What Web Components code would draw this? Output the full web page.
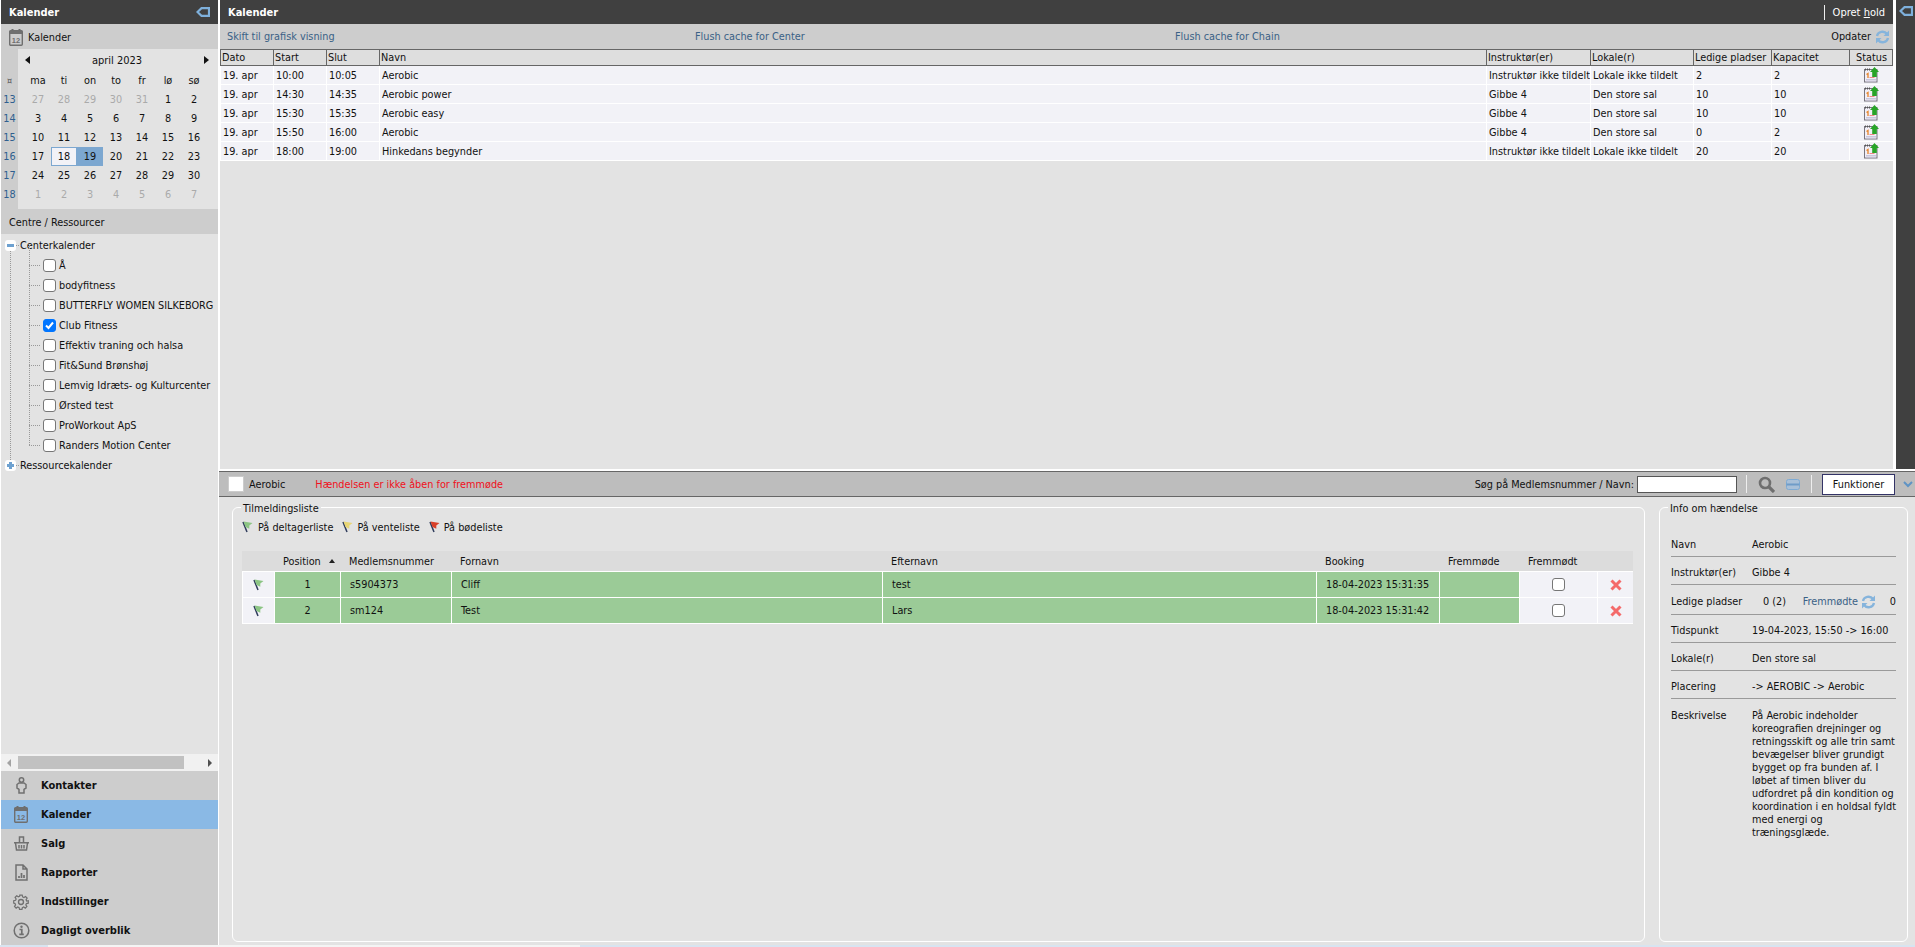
<!DOCTYPE html>
<html lang="da">
<head>
<meta charset="utf-8">
<title>Kalender</title>
<style>
    html, body { margin: 0; height: 100%; overflow: hidden; background: #fff; }
    body { font: 10.8px "DejaVu Sans Condensed", "DejaVu Sans", sans-serif; color: #111; }
</style>
</head>
<body>
<app-shell></app-shell>
<page-foot></page-foot>
<script>
// icons used in more than one component
const icons = {
    back: `<svg width="14" height="10" viewBox="0 0 14 10"><path d="M1.500 5 5.500 1.200H13v7.600H5.500z" fill="none" stroke="#7eb0dc" stroke-width="2.200"/></svg>`,
    refresh: `<svg width="15" height="14" viewBox="0 0 15 14" fill="none" stroke="#86b4dc" stroke-width="2.300"><path d="M2 6a5.500 5 0 0 1 10-2"/><path d="M13 8a5.500 5 0 0 1-10 2"/><path d="M14 .5v5.500H8.500z" fill="#86b4dc" stroke="none"/><path d="M1 13.500V8h5.500z" fill="#86b4dc" stroke="none"/></svg>`,
    cal: `<svg width="14" height="17" viewBox="0 0 14 17"><path d="M3.500 0v3M10.500 0v3" stroke="#6f6f6f" stroke-width="2"/><rect x=".7" y="1.700" width="12.600" height="14.600" rx="1" fill="none" stroke="#6f6f6f" stroke-width="1.400"/><rect x=".7" y="1.700" width="12.600" height="3.300" fill="#6f6f6f"/><text x="7" y="14" font-size="7.500" font-weight="700" font-family="Liberation Sans" text-anchor="middle" fill="#6f6f6f">12</text></svg>`
};
const flag = c => `<svg width="11" height="12" viewBox="0 0 11 12"><path d="M1 1 5 11" stroke="#2f3c5c" stroke-width="1.500"/><path d="M1.500 .5 10.500 2 7.300 4.500 7.300 7.800 3.500 6z" fill="${c}"/></svg>`;
const greenFlag = flag('#8cc584');

class CalHead extends HTMLElement {
    constructor() {
        super();
        this.attachShadow({ mode: 'open' }).innerHTML = `
            <style>
                :host { display: flex; align-items: center; height: 24px; background: #404040; color: #fff; font-weight: 700; font-size: 11px; padding: 0 8px; }
                ::slotted(*) { margin-left: auto; }
            </style>
            <span><slot name="title"></slot></span><slot></slot>`;
    }
}
customElements.define('cal-head', CalHead);

class MiniCalendar extends HTMLElement {
    constructor() {
        super();
        const shadow = this.attachShadow({ mode: 'open' });
        const weeks = [[13, 27, 28, 29, 30, 31, 1, 2], [14, 3, 4, 5, 6, 7, 8, 9], [15, 10, 11, 12, 13, 14, 15, 16],
            [16, 17, 18, 19, 20, 21, 22, 23], [17, 24, 25, 26, 27, 28, 29, 30], [18, 1, 2, 3, 4, 5, 6, 7]];
        let rows = '';
        weeks.forEach((w, r) => {
            rows += `<div class="wk">${w[0]}</div>`;
            w.slice(1).forEach(d => {
                const other = (r === 0 && d > 20) || r === 5;
                const cls = other ? 'other' : d === 18 ? 'today' : d === 19 ? 'sel' : '';
                rows += `<div class="d ${cls}">${d}</div>`;
            });
            rows += '<div></div>';
        });
        shadow.innerHTML = `
            <style>
                :host { display: grid; grid-template-columns: 24px repeat(7, 26px) 11px; grid-template-rows: 22px 19px repeat(6, 19px) 5px; background: linear-gradient(90deg, #cdcdcd 17px, #e3e3e3 17px); height: 160px; }
                div { display: flex; align-items: center; justify-content: center; }
                .top { grid-column: 2 / 10; justify-content: space-between; padding: 0 9px 0 0; font-size: 11px; }
                .tri { width: 0; height: 0; border: 4px solid transparent; border-left: 0; border-right: 5px solid #111; }
                .tri.r { border-right: 0; border-left: 5px solid #111; }
                .wk { color: #2f5f8f; padding-right: 7px; }
                .corner { color: #555; font-size: 9px; padding-right: 7px; }
                .other { color: #aaa; }
                .today { background: #f2f2f7; box-shadow: inset 0 0 0 1px #7ca7d0; }
                .sel { background: #7ca7d0; }
            </style>
            <div></div>
            <div class="top"><span class="tri"></span><span>april 2023</span><span class="tri r"></span></div>
            <div class="corner">¤</div>
            ${['ma', 'ti', 'on', 'to', 'fr', 'lø', 'sø'].map(d => `<div>${d}</div>`).join('')}<div></div>
            ${rows}`;
    }
}
customElements.define('mini-calendar', MiniCalendar);

class ResourceTree extends HTMLElement {
    constructor() {
        super();
        const shadow = this.attachShadow({ mode: 'open' });
        const names = ['Å', 'bodyfitness', 'BUTTERFLY WOMEN SILKEBORG', 'Club Fitness', 'Effektiv traning och halsa',
            'Fit&amp;Sund Brønshøj', 'Lemvig Idræts- og Kulturcenter', 'Ørsted test', 'ProWorkout ApS', 'Randers Motion Center'];
        shadow.innerHTML = `
            <style>
                :host { display: block; position: relative; flex: 1; background: #e3e3e3; padding-top: 1px; overflow: hidden; white-space: nowrap; }
                .root, .kid { display: flex; align-items: center; height: 20px; }
                .root { position: relative; padding-left: 19px; }
                .root::before { content: ""; width: 9px; border-top: 1px dotted #999; position: absolute; left: 11px; }
                .exp { position: absolute; z-index: 1; left: 4px; width: 11px; height: 11px; border-radius: 3px; background: #fff; }
                .exp::before { content: ""; position: absolute; left: 2px; right: 2px; top: 4px; height: 3px; background: #6ea1d0; }
                .exp.plus::after { content: ""; position: absolute; left: 4px; top: 2px; width: 3px; height: 7px; background: #6ea1d0; }
                .kids { position: relative; margin-left: 28px; }
                .kids::before { content: ""; position: absolute; left: 0; top: -10px; bottom: 10px; border-left: 1px dotted #999; }
                .vert { position: absolute; left: 9px; top: 10px; height: 220px; border-left: 1px dotted #999; }
                .kid::before { content: ""; width: 11px; margin-right: 3px; border-top: 1px dotted #999; }
                .box { width: 13px; height: 13px; box-sizing: border-box; border: 1px solid #767676; border-radius: 3px; background: #fff; margin-right: 3px; flex: none; }
                .box.on { background: #0075ff; border-color: #0075ff; position: relative; }
                .box.on svg { position: absolute; left: 0; top: 0; }
            </style>
            <div class="vert"></div>
            <div class="root"><span class="exp"></span>Centerkalender</div>
            <div class="kids">
                ${names.map(n => `<div class="kid"><span class="box ${n === 'Club Fitness' ? 'on' : ''}">${n === 'Club Fitness' ? '<svg width="11" height="11" viewBox="0 0 11 11"><path d="M2 5.500 4.500 8 9 2.500" fill="none" stroke="#fff" stroke-width="2"/></svg>' : ''}</span>${n}</div>`).join('')}
            </div>
            <div class="root"><span class="exp plus"></span>Ressourcekalender</div>`;
    }
}
customElements.define('resource-tree', ResourceTree);

class FakeScrollbar extends HTMLElement {
    constructor() {
        super();
        this.attachShadow({ mode: 'open' }).innerHTML = `
            <style>
                :host { display: flex; align-items: center; justify-content: space-between; height: 17px; background: #f1f1f1; position: relative; padding: 0 6px; box-sizing: border-box; }
                .thumb { position: absolute; left: 17px; width: 166px; top: 2px; height: 13px; background: #c1c1c1; }
                i { width: 0; height: 0; border: 4px solid transparent; border-left: 0; border-right: 4px solid #a3a3a3; }
                i.r { border-right: 0; border-left: 4px solid #505050; }
            </style>
            <i></i><div class="thumb"></div><i class="r"></i>`;
    }
}
customElements.define('fake-scrollbar', FakeScrollbar);

class NavMenu extends HTMLElement {
    constructor() {
        super();
        const shadow = this.attachShadow({ mode: 'open' });
        const g = 'fill="none" stroke="#707070" stroke-width="1.500"';
        const items = [
            ['Kontakter', `<svg width="11" height="17" viewBox="0 0 11 17" ${g}><circle cx="5.500" cy="3" r="2.200"/><path d="M3 6h5l2 1.500v3.500L8 12.300V16H3v-3.700L1 11V7.500z"/></svg>`],
            ['Kalender', icons.cal],
            ['Salg', `<svg width="15" height="15" viewBox="0 0 15 15" ${g}><path d="M5.500 6V1h4v5M0 6.800h15M1.500 7l1 7h10l1-7M5 9v3.500M7.500 9v3.500M10 9v3.500"/></svg>`],
            ['Rapporter', `<svg width="13" height="17" viewBox="0 0 13 17" ${g}><path d="M1 1h7l4 4v11H1zM8 1v4h4"/><path d="M4 14v-2M6.500 14V9M9 14v-3" stroke-width="1.700"/></svg>`],
            ['Indstillinger', `<svg width="16" height="16" viewBox="0 0 18 18" ${g}><circle cx="9" cy="9" r="2.800"/><path d="M7.500 1h3l.5 2.300 1.600.7 2-1.300 2 2-1.300 2 .7 1.600L18 8v3l-2.300.5-.7 1.600 1.300 2-2 2-2-1.300-1.600.7-.5 2.300h-3L6.700 16.500 5 15.800l-2 1.300-2-2 1.300-2-.7-1.600L0 11V8l2.300-.5.7-1.600-1.300-2 2-2 2 1.300 1.600-.7z" transform="translate(.8 .3) scale(.91)"/></svg>`],
            ['Dagligt overblik', `<svg width="17" height="17" viewBox="0 0 17 17" ${g}><circle cx="8.500" cy="8.500" r="7.300"/><path d="M6.500 7.500h2.300v4.500M6.300 12.300h4.500" stroke-width="1.700"/><circle cx="8.500" cy="4.800" r="1.200" fill="#707070" stroke="none"/></svg>`]
        ];
        shadow.innerHTML = `
            <style>
                :host { display: block; background: #cdcdcd; font-weight: 700; font-size: 11px; }
                a { display: grid; grid-template-columns: 40px 1fr; align-items: center; height: 29px; }
                a.on { background: #8ab9e5; }
                span { display: flex; justify-content: center; width: 30px; margin-left: 5px; }
            </style>
            ${items.map(([t, i]) => `<a class="${t === 'Kalender' ? 'on' : ''}"><span>${i}</span>${t}</a>`).join('')}`;
    }
}
customElements.define('nav-menu', NavMenu);

class CalSidebar extends HTMLElement {
    constructor() {
        super();
        this.attachShadow({ mode: 'open' }).innerHTML = `
            <style>
                :host { display: flex; flex-direction: column; width: 217px; margin: 0 2px 0 1px; height: 945px; }
                .sec { display: flex; align-items: center; gap: 5px; height: 24px; padding-top: 1px; background: #cdcdcd; padding-left: 8px; }
            </style>
            <cal-head><span slot="title">Kalender</span>${icons.back}</cal-head>
            <div class="sec">${icons.cal}Kalender</div>
            <mini-calendar></mini-calendar>
            <div class="sec">Centre / Ressourcer</div>
            <resource-tree></resource-tree>
            <fake-scrollbar></fake-scrollbar>
            <nav-menu></nav-menu>`;
    }
}
customElements.define('cal-sidebar', CalSidebar);

class EventList extends HTMLElement {
    constructor() {
        super();
        const shadow = this.attachShadow({ mode: 'open' });
        // notepad with green arrow from the old icon set
        const status = `<svg width="15" height="16" viewBox="0 0 15 16"><rect x=".5" y="2.500" width="12.500" height="12.500" fill="#f1eef6" stroke="#77757f"/><path d="M1 2.500h5" stroke="#555" stroke-dasharray="1 1" stroke-width="2"/><path d="M2 12.500h10M2 14h10" stroke="#c9c6dc"/><path d="M2.500 7.500l1.500-1V11" stroke="#e8862a" stroke-width="1.300" fill="none"/><path d="M5.500 10.500h5" stroke="#ee8888"/><path d="M10.500 0 15 5h-2.200v5H8.200V5H6z" fill="#28a428"/></svg>`;
        const rows = [
            ['10:00', '10:05', 'Aerobic', 'Instruktør ikke tildelt', 'Lokale ikke tildelt', 2, 2],
            ['14:30', '14:35', 'Aerobic power', 'Gibbe 4', 'Den store sal', 10, 10],
            ['15:30', '15:35', 'Aerobic easy', 'Gibbe 4', 'Den store sal', 10, 10],
            ['15:50', '16:00', 'Aerobic', 'Gibbe 4', 'Den store sal', 0, 2],
            ['18:00', '19:00', 'Hinkedans begynder', 'Instruktør ikke tildelt', 'Lokale ikke tildelt', 20, 20]
        ];
        const widths = [53, 53, 53, 1107, 104, 103, 78, 78, 44];
        shadow.innerHTML = `
            <style>
                :host { display: block; flex: 1; background: #e3e3e3; }
                .bar { display: grid; grid-template-columns: 468px 480px 1fr auto; align-items: center; height: 25px; background: #cdcdcd; padding: 0 3px 0 7px; color: #3a6186; }
                .upd { display: flex; align-items: center; gap: 4px; color: #111; }
                table { border-collapse: separate; border-spacing: 0; table-layout: fixed; width: 1673px; }
                th { height: 15px; background: #dedede; font-weight: 400; text-align: left; padding: 0 0 0 1px; border-top: 1px solid #666; border-bottom: 1px solid #666; border-left: 1px solid #666; }
                th:last-child { text-align: center; border-right: 1px solid #666; }
                td { height: 17px; padding: 1px 0 0 2px; background: #f2f2f7; border-bottom: 1px solid #fff; border-left: 1px solid #fff; white-space: nowrap; overflow: hidden; }
                td:last-child { text-align: center; padding: 0; }
                td svg { vertical-align: middle; }
            </style>
            <div class="bar">
                <span>Skift til grafisk visning</span><span>Flush cache for Center</span><span>Flush cache for Chain</span>
                <span class="upd">Opdater ${icons.refresh}</span>
            </div>
            <table>
                <colgroup>${widths.map(w => `<col style="width:${w}px">`).join('')}</colgroup>
                <tr>${['Dato', 'Start', 'Slut', 'Navn', 'Instruktør(er)', 'Lokale(r)', 'Ledige pladser', 'Kapacitet', 'Status'].map(h => `<th>${h}</th>`).join('')}</tr>
                ${rows.map(r => `<tr><td>19. apr</td>${r.map(c => `<td>${c}</td>`).join('')}<td>${status}</td></tr>`).join('')}
            </table>`;
    }
}
customElements.define('event-list', EventList);

class EventBar extends HTMLElement {
    constructor() {
        super();
        this.attachShadow({ mode: 'open' }).innerHTML = `
            <style>
                :host { display: flex; align-items: center; height: 24px; background: #bdbdbd; border-top: 1px solid #666; border-bottom: 1px solid #666; padding-left: 10px; }
                .sw { width: 14px; height: 14px; background: #fff; box-shadow: 0 0 0 1px #ccc; margin-right: 6px; }
                .red { color: #f01020; margin-left: 30px; }
                .right { margin-left: auto; display: flex; align-items: center; }
                .in { width: 98px; height: 15px; background: #fff; border: 1px solid #555; margin: 0 9px 0 3px; }
                .sep { width: 1px; height: 18px; background: #eee; }
                .btn { width: 71px; height: 19px; display: flex; align-items: center; justify-content: center; background: #fff; border: 1px solid #336; margin: 0 8px 0 10px; }
            </style>
            <span class="sw"></span><span>Aerobic</span><span class="red">Hændelsen er ikke åben for fremmøde</span>
            <div class="right">
                <span>Søg på Medlemsnummer / Navn:</span><span class="in"></span><span class="sep"></span>
                <svg style="margin:0 11px" width="17" height="17" viewBox="0 0 17 17" fill="none" stroke="#6f6f6f"><circle cx="7" cy="7" r="5" stroke-width="2.600"/><path d="M11 11l5 5" stroke-width="3.200"/></svg>
                <svg style="margin-right:11px" width="14" height="11" viewBox="0 0 14 11" fill="#a9c0d8" stroke="#7eabd4"><rect x=".5" y=".5" width="13" height="10" rx="2"/><path d="M.5 5.500h13" stroke="#6f9cc8" stroke-width="2"/></svg>
                <span class="sep"></span>
                <span class="btn">Funktioner</span>
                <svg style="margin-right:2px" width="10" height="7" viewBox="0 0 10 7"><path d="M1 1l4 4 4-4" fill="none" stroke="#5f93c4" stroke-width="2"/></svg>
            </div>`;
    }
}
customElements.define('event-bar', EventBar);

class FieldBox extends HTMLElement {
    constructor() {
        super();
        this.attachShadow({ mode: 'open' }).innerHTML = `
            <style>
                :host { display: block; position: relative; box-sizing: border-box; border: 1px solid #fff; border-radius: 6px; }
                .leg { position: absolute; left: 8px; top: -6px; background: #e3e3e3; padding: 0 2px; line-height: 13px; }
            </style>
            <span class="leg"><slot name="legend"></slot></span><slot></slot>`;
    }
}
customElements.define('field-box', FieldBox);

class SignupList extends HTMLElement {
    constructor() {
        super();
        const shadow = this.attachShadow({ mode: 'open' });
        const cross = `<svg width="12" height="12" viewBox="0 0 12 12"><path d="M1.500 1.500l9 9M10.500 1.500l-9 9" stroke="#f46a6a" stroke-width="3"/></svg>`;
        const rows = [[1, 's5904373', 'Cliff', 'test', '18-04-2023 15:31:35'], [2, 'sm124', 'Test', 'Lars', '18-04-2023 15:31:42']];
        const widths = [32, 66, 111, 431, 434, 123, 80, 78, 36];
        shadow.innerHTML = `
            <style>
                :host { display: block; padding: 12px 9px 0 9px; }
                .legend { display: flex; align-items: center; height: 14px; }
                .legend span { margin: 0 5px 0 4px; }
                .legend span:first-of-type { margin-left: 5px; }
                .legend span + svg { margin-left: 4px; }
                table { border-collapse: separate; border-spacing: 0; table-layout: fixed; width: 1391px; margin-top: 17px; }
                th { height: 20px; padding: 0 0 0 9px; background: #dcdcdc; font-weight: 400; text-align: left; border-bottom: 1px solid #fff; }
                .car { display: inline-block; border: 3.500px solid transparent; border-top: 0; border-bottom: 4px solid #222; margin-left: 5px; vertical-align: 2px; }
                td { height: 25px; padding: 0 0 0 9px; background: #9bcb97; border-bottom: 1px solid #fff; border-left: 1px solid #fff; }
                td.n { text-align: center; padding: 0; }
                td.p { background: #f2f2f7; padding: 0; text-align: center; }
                td svg { vertical-align: middle; }
                .cb { display: inline-block; vertical-align: middle; width: 13px; height: 13px; box-sizing: border-box; border: 1px solid #767676; border-radius: 3px; background: #fff; }
            </style>
            <div class="legend">${greenFlag}<span>På deltagerliste</span>${flag('#e8d676')}<span>På venteliste</span>${flag('#d8402a')}<span>På bødeliste</span></div>
            <table>
                <colgroup>${widths.map(w => `<col style="width:${w}px">`).join('')}</colgroup>
                <tr><th></th><th>Position <i class="car"></i></th><th>Medlemsnummer</th><th>Fornavn</th><th>Efternavn</th><th>Booking</th><th>Fremmøde</th><th>Fremmødt</th><th></th></tr>
                ${rows.map(r => `<tr><td class="p">${greenFlag}</td><td class="n">${r[0]}</td><td>${r[1]}</td><td>${r[2]}</td><td>${r[3]}</td><td>${r[4]}</td><td></td><td class="p"><span class="cb"></span></td><td class="p">${cross}</td></tr>`).join('')}
            </table>`;
    }
}
customElements.define('signup-list', SignupList);

class EventInfo extends HTMLElement {
    constructor() {
        super();
        const shadow = this.attachShadow({ mode: 'open' });
        const row = (h, l, v) => `<div class="row" style="height:${h}px"><span>${l}</span><span>${v}</span></div>`;
        shadow.innerHTML = `
            <style>
                :host { display: block; padding: 21px 11px 0 11px; }
                .row { display: grid; grid-template-columns: 81px 1fr; align-items: center; border-bottom: 1px solid #9a9a9a; box-sizing: border-box; padding-top: 4px; }
                .free { display: flex; justify-content: space-between; align-items: center; }
                .free em { display: flex; align-items: center; gap: 3px; font-style: normal; color: #3a6186; margin: 0 12px 0 15px; }
                .desc { display: grid; grid-template-columns: 81px 1fr; line-height: 13px; padding-top: 10px; white-space: nowrap; }
            </style>
            ${row(28, 'Navn', 'Aerobic')}
            ${row(28, 'Instruktør(er)', 'Gibbe 4')}
            <div class="row" style="height:30px"><span>Ledige pladser</span><span class="free"><span style="margin-left:11px">0 (2)</span><em>Fremmødte ${icons.refresh}</em><span>0</span></span></div>
            ${row(28, 'Tidspunkt', '19-04-2023, 15:50 -&gt; 16:00')}
            ${row(28, 'Lokale(r)', 'Den store sal')}
            ${row(28, 'Placering', '-&gt; AEROBIC -&gt; Aerobic')}
            <div class="desc"><span>Beskrivelse</span><span>På Aerobic indeholder<br>koreografien drejninger og<br>retningsskift og alle trin samt<br>bevægelser bliver grundigt<br>bygget op fra bunden af. I<br>løbet af timen bliver du<br>udfordret på din kondition og<br>koordination i en holdsal fyldt<br>med energi og<br>træningsglæde.</span></div>`;
    }
}
customElements.define('event-info', EventInfo);

class PageFoot extends HTMLElement {
    constructor() {
        super();
        this.attachShadow({ mode: 'open' }).innerHTML = `
            <style>
                :host { display: block; height: 2px; background: linear-gradient(90deg, #d8e4f0 48px, #f4f4f4 48px, #f4f4f4 580px, #d8e4f0 580px); }
            </style>`;
    }
}
customElements.define('page-foot', PageFoot);

class AppShell extends HTMLElement {
    constructor() {
        super();
        this.attachShadow({ mode: 'open' }).innerHTML = `
            <style>
                :host { display: flex; height: 945px; background: #fff; }
                main { flex: 1; display: flex; flex-direction: column; min-width: 0; }
                .up { display: grid; grid-template-columns: 1673px 3px 1fr; height: 469px; flex: none; }
                .col { display: flex; flex-direction: column; }
                .strip { grid-column: 3; background: #404040; display: flex; justify-content: center; padding-top: 6px; align-items: flex-start; }
                .hold { display: flex; align-items: center; gap: 8px; font-weight: 400; }
                .hold i { width: 1px; height: 15px; background: #eee; }
                .low { flex: 1; margin: 2px 0 0 -1px; background: #e3e3e3; display: flex; flex-direction: column; }
                .sets { flex: 1; display: grid; grid-template-columns: 1413px 249px; column-gap: 14px; padding: 10px 8px 3px 13px; }
            </style>
            <cal-sidebar></cal-sidebar>
            <main>
                <div class="up">
                    <div class="col">
                        <cal-head><span slot="title">Kalender</span><span class="hold"><i></i><span>Opret <u>h</u>old</span></span></cal-head>
                        <event-list></event-list>
                    </div>
                    <div class="strip">${icons.back}</div>
                </div>
                <div class="low">
                    <event-bar></event-bar>
                    <div class="sets">
                        <field-box><span slot="legend">Tilmeldingsliste</span><signup-list></signup-list></field-box>
                        <field-box><span slot="legend">Info om hændelse</span><event-info></event-info></field-box>
                    </div>
                </div>
            </main>`;
    }
}
customElements.define('app-shell', AppShell);
</script>
</body>
</html>
